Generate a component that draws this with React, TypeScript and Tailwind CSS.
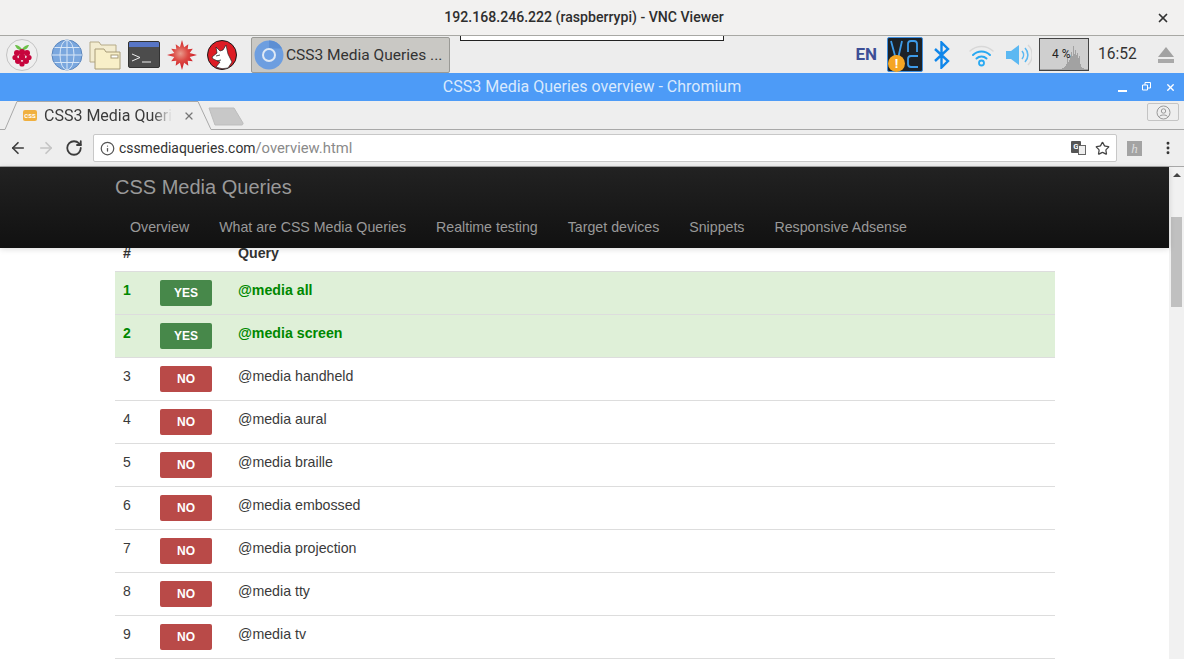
import { ArrowLeft, ArrowRight, Info, MoreVertical, RotateCw, Star, X } from "lucide-react";

const navItems = ["Overview", "What are CSS Media Queries", "Realtime testing", "Target devices", "Snippets", "Responsive Adsense"];

const queries = [
  { id: 1, name: "@media all", ok: true },
  { id: 2, name: "@media screen", ok: true },
  { id: 3, name: "@media handheld", ok: false },
  { id: 4, name: "@media aural", ok: false },
  { id: 5, name: "@media braille", ok: false },
  { id: 6, name: "@media embossed", ok: false },
  { id: 7, name: "@media projection", ok: false },
  { id: 8, name: "@media tty", ok: false },
  { id: 9, name: "@media tv", ok: false },
];

function Raspberry() {
  return (
    <div className="flex h-8 w-8 items-center justify-center rounded-full border border-[#c4c4c4] bg-[#efefef]">
      <svg width="20" height="24" viewBox="0 0 20 24">
        <path d="M10 6C7 2 4 2 3 2c1 3 3 5 7 5s6-2 7-5c-1 0-4 0-7 4z" fill="#6cc04a" />
        <g fill="#c7053d">
          <circle cx="10" cy="9" r="3" />
          <circle cx="5" cy="10" r="3" />
          <circle cx="15" cy="10" r="3" />
          <circle cx="3" cy="14.5" r="2.6" />
          <circle cx="17" cy="14.5" r="2.6" />
          <circle cx="10" cy="14" r="3.2" />
          <circle cx="6" cy="18" r="3" />
          <circle cx="14" cy="18" r="3" />
          <circle cx="10" cy="21" r="2.6" />
        </g>
      </svg>
    </div>
  );
}

function Globe() {
  return (
    <svg width="32" height="32" viewBox="0 0 32 32" fill="none">
      <circle cx="16" cy="16" r="15" fill="#7aa7de" stroke="#5b86bd" />
      <g stroke="#d7e6f7" strokeWidth="1">
        <ellipse cx="16" cy="16" rx="7" ry="15" />
        <path d="M16 1v30M1 16h30M3.5 8.5h25M3.5 23.5h25" />
      </g>
    </svg>
  );
}

function Folders() {
  return (
    <svg width="32" height="30" viewBox="0 0 32 30" fill="none">
      <path d="M1 2h9l2 3h15v17H1z" fill="#f3ecd0" stroke="#b5aa88" />
      <path d="M6 9h9l2 3h14v17H6z" fill="#f8efc8" stroke="#a89c78" />
      <rect x="22" y="15" width="7" height="3" fill="#fff" stroke="#a89c78" />
    </svg>
  );
}

function Terminal() {
  return (
    <div className="flex h-[27px] w-8 flex-col overflow-hidden rounded-[2px] border border-[#333] bg-[#4c4c4c]">
      <div className="h-[5px] bg-[#5876c6]" />
      <svg width="30" height="20" viewBox="0 0 30 20" fill="none" stroke="#eee" strokeWidth="1">
        <path d="M3 7l8 3.500-8 3.500M13 15h9" />
      </svg>
    </div>
  );
}

function burstPath() {
  const pts: string[] = [];
  for (let i = 0; i < 12; i++) {
    const r = i % 3 === 0 ? 15 : 12.5;
    const a = (i / 12) * Math.PI * 2 - Math.PI / 2;
    const b = a + Math.PI / 12;
    pts.push(`${(15 + Math.cos(a) * r).toFixed(1)},${(15 + Math.sin(a) * r).toFixed(1)}`);
    pts.push(`${(15 + Math.cos(b) * 8).toFixed(1)},${(15 + Math.sin(b) * 8).toFixed(1)}`);
  }
  return pts.join(" ");
}

function Burst() {
  return (
    <svg width="30" height="30" viewBox="0 0 30 30">
      <defs>
        <radialGradient id="burst" cx="0.45" cy="0.45" r="0.55">
          <stop offset="0" stopColor="#e99a8c" />
          <stop offset="0.45" stopColor="#dc4a44" />
          <stop offset="1" stopColor="#cc1420" />
        </radialGradient>
      </defs>
      <polygon points={burstPath()} fill="url(#burst)" />
    </svg>
  );
}

function WolfLogo() {
  return (
    <svg width="30" height="30" viewBox="0 0 30 30">
      <circle cx="15" cy="15" r="14.500" fill="#dd1c24" stroke="#1a1a1a" />
      <path d="M9 7l4 4 3-1 3-5 2 9 4 8-4 6q-6 2-12-1l4-5-7-3-1-2 5-4z" fill="#fff" stroke="#222" strokeWidth="0.7" />
      <path d="M9 16l4-1M10 21l4-1" stroke="#222" strokeWidth="0.8" />
    </svg>
  );
}

function ChromiumIcon() {
  return (
    <svg width="30" height="30" viewBox="0 0 30 30" fill="none">
      <circle cx="15" cy="15" r="14.500" fill="#6d9ee0" />
      <path d="M15 .5a14.500 14.500 0 0 1 13 8H15z" fill="#5d8fd4" />
      <circle cx="15" cy="15" r="7" fill="#dfe9f5" />
      <circle cx="15" cy="15" r="5" fill="#6fa2e6" />
    </svg>
  );
}

function VncIcon() {
  return (
    <div className="relative h-[35px] w-[36px] rounded-[2px] border border-[#3f8fe0] bg-[#1c2228]">
      <svg width="34" height="33" viewBox="0 0 34 33" fill="none" stroke="#3d9be9" strokeWidth="1.800">
        <path d="M3 3l6 22 5-22" />
        <path d="M20 14V6a3 3 0 0 1 3-3h3a3 3 0 0 1 3 3v8" />
        <path d="M30 18h-7a3 3 0 0 0-3 3v5a3 3 0 0 0 3 3h7" />
      </svg>
      <div className="absolute bottom-[-1px] left-0 flex h-[17px] w-[17px] items-center justify-center rounded-full bg-[#f5a623] text-[13px] font-bold leading-none text-white">
        !
      </div>
    </div>
  );
}

function BluetoothIcon() {
  return (
    <svg width="18" height="28" viewBox="0 0 18 28" fill="none" stroke="#0f86ea" strokeWidth="2.400">
      <path d="M2 8l13 12-6.500 6.500v-25L15 8 2 20" />
    </svg>
  );
}

function WifiIcon() {
  return (
    <svg width="27" height="26" viewBox="0 0 27 26" fill="none" strokeLinecap="round">
      <path d="M2 9a17 17 0 0 1 23 0" stroke="#d8d8d8" strokeWidth="1.500" />
      <path d="M5 13a12 12 0 0 1 17 0M8.500 16.500a7 7 0 0 1 10 0" stroke="#29a9f2" strokeWidth="2" />
      <circle cx="13.500" cy="21" r="2.500" stroke="#29a9f2" strokeWidth="1.800" />
    </svg>
  );
}

function SpeakerIcon() {
  return (
    <svg width="27" height="26" viewBox="0 0 27 26" fill="none">
      <path d="M1 9h5l8-6v20l-8-6H1z" fill="#5bb8f2" />
      <path d="M17 9a6 6 0 0 1 0 8M20 6a10 10 0 0 1 0 14" stroke="#5bb8f2" strokeWidth="1.600" />
      <path d="M23 3a14 14 0 0 1 0 20" stroke="#d8d8d8" strokeWidth="1.500" />
    </svg>
  );
}

function CpuGraph() {
  const bars = [1, 1, 1, 1, 1, 1, 1, 1, 1, 1, 1, 1, 1, 1, 1, 1, 1, 1, 1, 1, 1, 1, 2, 2, 3, 4, 6, 12, 8, 10, 14, 18, 14, 24, 16, 20, 15, 17, 12, 14, 6, 3, 2, 2, 1, 1, 1, 1];
  return (
    <div className="relative flex h-[33px] w-[50px] items-end border border-[#444] bg-[#cfcfcf]">
      {bars.map((h, i) => (
        <div key={i} className="w-px shrink-0 bg-[#a2a2a2]" style={{ height: h }} />
      ))}
      <span className="absolute left-[12px] top-[7px] text-[12px] leading-[16px] text-[#222]">4 %</span>
    </div>
  );
}

function Eject() {
  return (
    <svg width="18" height="18" viewBox="0 0 18 18">
      <path d="M9 1l8 10H1z" fill="#a2a2a2" />
      <rect x="1" y="13" width="16" height="4" fill="#a9a9a9" />
    </svg>
  );
}

function TabStrip() {
  return (
    <div className="relative h-[29px] shrink-0 bg-[#eeeeee] font-['Roboto',sans-serif]">
      <svg className="absolute left-0 top-0" width="1184" height="29" viewBox="0 0 1184 29" fill="none">
        <path d="M0 28.500h5L17 .5h181l13 28H1184" stroke="#a8a8a8" />
        <path d="M209 7h25l9 15a1.500 1.500 0 0 1-1.500 2H215z" fill="#c8c8c8" stroke="#bdbdbd" />
      </svg>
      <div className="absolute left-[23px] top-[9px] flex h-[11px] w-[14px] items-center justify-center rounded-[2px] bg-[#f0b040] text-[6px] font-bold leading-none text-white">
        CSS
      </div>
      <span className="absolute left-[44px] top-[5px] whitespace-nowrap text-[16px] leading-[20px] text-[#3b3b3b] [mask-image:linear-gradient(to_right,black_85%,transparent_100%)]">
        CSS3 Media Queri
      </span>
      <X className="absolute left-[183px] top-[9px] text-[#777]" size={12} strokeWidth={2.4} />
      <div className="absolute left-[1147px] top-[2px] flex h-[18px] w-[32px] items-center justify-center rounded-[2px] border border-[#c4c4c4]">
        <svg width="15" height="15" viewBox="0 0 15 15" fill="none" stroke="#999">
          <circle cx="7.500" cy="7.500" r="6.500" />
          <circle cx="7.500" cy="6" r="2.200" />
          <path d="M3.500 11.500c1-2 7-2 8 0" />
        </svg>
      </div>
    </div>
  );
}

function Toolbar() {
  return (
    <div className="flex h-[37px] shrink-0 items-center border-b border-[#a8a8a8] bg-[#eeeeee] font-['Roboto',sans-serif]">
      <ArrowLeft className="ml-[9px] text-[#3c3c3c]" size={18} strokeWidth={2.200} />
      <ArrowRight className="ml-[10px] text-[#c4c4c4]" size={18} strokeWidth={2.200} />
      <RotateCw className="ml-[10px] text-[#3c3c3c]" size={18} strokeWidth={2.400} />
      <div className="ml-[10px] flex h-[28px] w-[1024px] items-center rounded-[2px] border border-[#c8c8c8] bg-white pl-[6px] pr-[6px]">
        <Info className="text-[#555]" size={15} strokeWidth={2} />
        <span className="ml-[4px] pt-px text-[13.900px] leading-none text-[#333]">cssmediaqueries.com</span>
        <span className="pt-px text-[14.800px] leading-none text-[#8a8a8a]">/overview.html</span>
        <div className="ml-auto flex items-center gap-[9px]">
          <div className="relative h-[14px] w-[15px]">
            <div className="flex h-[12px] w-[10px] items-center justify-center rounded-[1px] bg-[#555] text-[8px] font-bold leading-none text-white">
              G
            </div>
            <div className="absolute bottom-0 right-0 h-[10px] w-[8px] border border-[#666] bg-[#eee]" />
          </div>
          <Star className="text-[#444]" size={15} strokeWidth={2} />
        </div>
      </div>
      <div className="ml-[10px] flex h-[15px] w-[15px] items-center justify-center bg-[#a3a3a3] font-['Liberation_Serif',serif] text-[13px] italic leading-none text-[#ddd]">
        h
      </div>
      <MoreVertical className="ml-[18px] text-[#333]" size={16} strokeWidth={2.400} />
    </div>
  );
}

function QueryRow({ id, name, ok }: { id: number; name: string; ok: boolean }) {
  return (
    <div
      className={`flex h-[43px] shrink-0 border-t border-[#dddddd] ${
        ok ? "bg-[#dff0d8] font-bold text-[#008800]" : "text-[#3a3a3a]"
      }`}
    >
      <span className="w-[45px] pl-2 pt-2 text-sm leading-[20px]">{id}</span>
      <div className="w-[78px] pt-2">
        <div
          className={`flex h-[26px] w-[52px] items-center justify-center rounded-[2px] text-[12px] font-bold text-white ${
            ok ? "bg-[#47884a]" : "bg-[#b94a48]"
          }`}
        >
          {ok ? "YES" : "NO"}
        </div>
      </div>
      <span className="pt-2 text-[14.200px] leading-[20px]">{name}</span>
    </div>
  );
}

export default function App() {
  return (
    <div className="flex h-[659px] w-[1184px] flex-col overflow-hidden bg-white font-['Liberation_Sans',sans-serif]">
      {/* VNC title bar */}
      <div className="relative flex h-[36px] shrink-0 items-center justify-center border-b border-[#a8a8a4] bg-[#f2f1f0] pr-[16px] font-['Roboto',sans-serif]">
        <span className="text-[14.100px] font-medium text-[#2e2e2e]">192.168.246.222 (raspberrypi) - VNC Viewer</span>
        <X className="absolute right-[14px] top-[11px] text-[#333]" size={14} strokeWidth={3} />
      </div>

      {/* Pi desktop panel */}
      <div className="relative flex h-[37px] shrink-0 items-center bg-[#ededed] pl-[6px] font-['Roboto',sans-serif]">
        <div className="absolute left-[460px] top-0 h-[5px] w-[264px] border-x border-b border-[#222] bg-white" />
        <Raspberry />
        <div className="ml-[13px]"><Globe /></div>
        <div className="ml-[6px]"><Folders /></div>
        <div className="ml-[7px]"><Terminal /></div>
        <div className="ml-[7px]"><Burst /></div>
        <div className="ml-[10px]"><WolfLogo /></div>
        <div className="ml-[14px] flex h-[36px] w-[199px] items-center gap-[2px] rounded-[2px] border border-[#9a9a96] bg-[#c9c8c4] pl-[2px]">
          <ChromiumIcon />
          <span className="whitespace-nowrap pt-[3px] text-[15.500px] text-[#333]">CSS3 Media Queries ...</span>
        </div>
        <div className="ml-auto flex items-center">
          <span className="mr-[10px] text-[17px] font-bold text-[#3d4f96]">EN</span>
          <VncIcon />
          <div className="ml-[10px]"><BluetoothIcon /></div>
          <div className="ml-[17px]"><WifiIcon /></div>
          <div className="ml-[10px]"><SpeakerIcon /></div>
          <div className="ml-[7px]"><CpuGraph /></div>
          <span className="ml-[9px] w-[42px] pt-px text-[15.600px] text-[#333]">16:52</span>
          <div className="ml-[17px] mr-[9px]"><Eject /></div>
        </div>
      </div>

      {/* Chromium window title */}
      <div className="relative flex h-[28px] shrink-0 items-center justify-center bg-[#4d9bf7] font-['Roboto',sans-serif]">
        <span className="text-[16px] text-[#d9e9fd]">CSS3 Media Queries overview - Chromium</span>
        <div className="absolute left-[1118px] top-[9px] flex items-start text-white">
          <div className="mt-[8px] h-[2px] w-[9px] bg-white" />
          <svg className="ml-[15px]" width="9" height="9" viewBox="0 0 9 9" fill="none" stroke="#fff">
            <path d="M.5 3h5v5h-5zM3 3V.5h5.500V6H6" />
          </svg>
          <X className="ml-[14px]" size={11} strokeWidth={3} />
        </div>
      </div>

      <TabStrip />
      <Toolbar />

      {/* Page */}
      <div className="flex min-h-0 flex-1">
        <div className="flex min-w-0 flex-1 flex-col">
          <div className="z-10 flex h-[81px] shrink-0 flex-col bg-gradient-to-b from-[#222222] to-[#111111] pl-[115px] shadow-[0_1px_6px_rgba(0,0,0,0.15)]">
            <span className="mt-[8px] text-[20px] leading-[24px] text-[#999999]">CSS Media Queries</span>
            <div className="mt-[18px] flex gap-[30px] text-[14.200px] leading-[20px] text-[#999999]">
              {navItems.map((item, i) => (
                <span key={item} className={i === 0 ? "ml-[15px]" : ""}>{item}</span>
              ))}
            </div>
          </div>
          <div className="ml-[115px] flex w-[940px] flex-col border-b border-[#dddddd]">
            <div className="flex h-[23px] shrink-0 text-[14.200px] font-bold leading-[10px] text-[#333333]">
              <span className="w-[123px] pl-2">#</span>
              <span>Query</span>
            </div>
            {queries.map((q) => (
              <QueryRow key={q.id} {...q} />
            ))}
          </div>
        </div>
        <div className="flex w-[15px] shrink-0 flex-col items-center bg-[#f1f1f1] pt-[6px]">
          <div className="h-0 w-0 border-x-[4px] border-b-[4px] border-x-transparent border-b-[#444]" />
          <div className="mt-[40px] h-[90px] w-[11px] bg-[#c0c0c0]" />
        </div>
      </div>
    </div>
  );
}
